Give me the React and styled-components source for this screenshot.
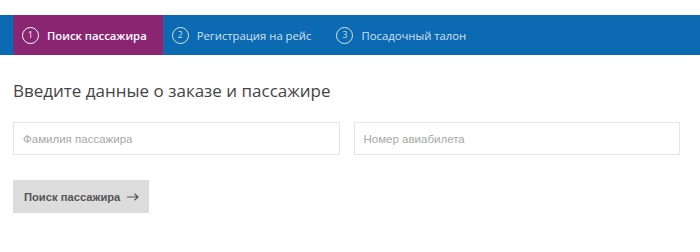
import React from 'react';
import styled, { createGlobalStyle } from 'styled-components';

const GlobalStyle = createGlobalStyle`
  body {
    margin: 0;
    background: #ffffff;
    font-family: "Open Sans", "Liberation Sans", sans-serif;
  }
`;

const Page = styled.div`
  width: 700px;
  padding-top: 15px;
`;

const Steps = styled.nav`
  display: flex;
  height: 40px;
  padding-left: 13px;
  background: #0b6ab2;
`;

const Step = styled.div`
  display: flex;
  align-items: center;
  gap: 8px;
  padding: 0 16px 0 9px;
  background: ${p => (p.active ? '#8a2572' : 'transparent')};
  color: ${p => (p.active ? '#ffffff' : 'rgba(255, 255, 255, 0.82)')};
  font-size: 11.3px;
  font-weight: ${p => (p.active ? 600 : 400)};
`;

const StepNum = styled.span`
  display: flex;
  align-items: center;
  justify-content: center;
  width: 15px;
  height: 15px;
  border: 1px solid currentColor;
  border-radius: 50%;
  font-size: 8.5px;
  font-weight: 400;
  line-height: 1;
`;

const Content = styled.main`
  padding: 24px 20px 0 13px;
`;

const Title = styled.h1`
  margin: 0;
  font-size: 17px;
  line-height: 24px;
  font-weight: 400;
  color: #444444;
`;

const Fields = styled.div`
  display: grid;
  grid-template-columns: 1fr 1fr;
  gap: 14px;
  margin-top: 19px;
`;

const Field = styled.input`
  box-sizing: border-box;
  height: 33px;
  padding: 0 9px;
  border: 1px solid #e6e6e6;
  font-family: "Liberation Sans", Arial, sans-serif;
  font-size: 11.5px;
  color: #333;
  outline: none;

  &::placeholder {
    color: #a8a8a8;
  }
`;

const Submit = styled.button`
  display: flex;
  align-items: center;
  gap: 7px;
  height: 33px;
  margin-top: 25px;
  padding: 0 10px 0 11px;
  border: none;
  background: #dcdcdc;
  color: #555555;
  font-family: "Liberation Sans", Arial, sans-serif;
  font-size: 11.2px;
  font-weight: 700;
`;

const steps = ['Поиск пассажира', 'Регистрация на рейс', 'Посадочный талон'];

const App = () => (
  <Page>
    <GlobalStyle />
    <Steps>
      {steps.map((s, i) => (
        <Step key={s} active={i === 0}>
          <StepNum>{i + 1}</StepNum>
          {s}
        </Step>
      ))}
    </Steps>
    <Content>
      <Title>Введите данные о заказе и пассажире</Title>
      <Fields>
        <Field placeholder="Фамилия пассажира" />
        <Field placeholder="Номер авиабилета" />
      </Fields>
      <Submit>
        Поиск пассажира
        <svg width="12" height="8" viewBox="0 0 12 8" fill="none" stroke="#555" strokeWidth="1.2">
          <path d="M0 4h11M7.5 0.8L11 4 7.5 7.2" />
        </svg>
      </Submit>
    </Content>
  </Page>
);

export default App;
